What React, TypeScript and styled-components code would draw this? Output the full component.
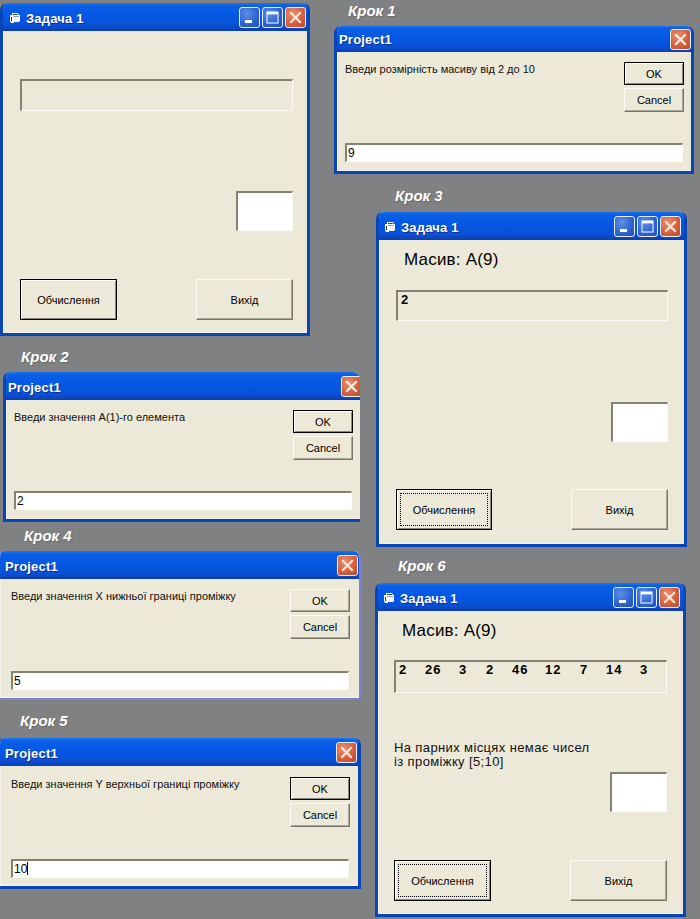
import React from "react";
import styled, { createGlobalStyle } from "styled-components";

const Global = createGlobalStyle`
  html, body { margin: 0; padding: 0; background: #808080; }
  #root { width: 700px; height: 919px; }
`;

const Desktop = styled.div`
  position: relative;
  width: 700px;
  height: 919px;
  overflow: hidden;
  background: #808182;
  font-family: "Liberation Sans", Arial, sans-serif;
`;

const StepLabel = styled.div<{ $x: number; $y: number }>`
  position: absolute;
  left: ${(p) => p.$x}px;
  top: ${(p) => p.$y}px;
  color: #fff;
  font: italic bold 15px/18px "Liberation Sans", Arial, sans-serif;
  text-shadow: 1px 1px 1px #6a6a6a;
  white-space: nowrap;
`;

const Win = styled.div<{ $x: number; $y: number; $w: number; $h: number; $cut?: boolean; $soft?: boolean }>`
  position: absolute;
  left: ${(p) => p.$x}px;
  top: ${(p) => p.$y}px;
  width: ${(p) => p.$w}px;
  height: ${(p) => p.$h}px;
  box-sizing: border-box;
  display: flex;
  flex-direction: column;
  border-style: solid;
  border-color: ${(p) => (p.$soft ? "#7d7fd0" : "#0a45b8")};
  border-width: 0 ${(p) => (p.$cut ? 0 : p.$soft ? 2 : 3)}px ${(p) => (p.$soft ? 2 : 3)}px 3px;
  border-radius: 7px 7px 0 0;
  overflow: hidden;
  background: #ece9d8;
`;

const TitleBar = styled.div<{ $tall: number; $left: number; $right: number }>`
  flex: none;
  height: ${(p) => p.$tall}px;
  display: flex;
  align-items: center;
  margin: 0 -3px;
  padding: 0 ${(p) => p.$right}px 0 ${(p) => p.$left}px;
  gap: 5px;
  background: linear-gradient(180deg, #1f76ec 0%, #0a5ee6 10%, #0558e4 45%, #0a50d6 80%, #0b3fae 100%);
`;

const TitleText = styled.span<{ $drop: number }>`
  flex: 1;
  padding-top: ${(p) => p.$drop}px;
  color: #fff;
  font: bold 13px/16px Tahoma, "Liberation Sans", sans-serif;
  letter-spacing: 0.2px;
  text-shadow: 1px 1px 0 #0a2f90;
  white-space: nowrap;
`;

const Controls = styled.div<{ $drop: number }>`
  display: flex;
  gap: 2px;
  margin-top: ${(p) => p.$drop}px;
`;

const CtlButton = styled.div<{ $close?: boolean }>`
  width: 21px;
  height: 21px;
  box-sizing: border-box;
  border: 1px solid #e8eefc;
  border-radius: 3px;
  display: flex;
  align-items: center;
  justify-content: center;
  background: ${(p) =>
    p.$close
      ? "radial-gradient(circle at 35% 30%, #e88f70 0%, #d6603c 55%, #b84a2a 100%)"
      : "radial-gradient(circle at 35% 30%, #5d8fe6 0%, #2c62cf 60%, #1f4fb8 100%)"};
`;

const AppIcon = () => (
  <svg width="12" height="12" viewBox="0 0 12 12" style={{ flex: "none", marginTop: 2 }}>
    <path d="M1 3h2V1h6l1 2h1v6l-1 1H5v1H2l-1-2z" fill="#fff" />
    <path d="M2 2h1v1H2zM4 2h5v1H4zM2 5h1v4H2z" fill="#30405e" />
    <path d="M4 4h6v1H4z" fill="#8ea2c8" />
  </svg>
);

const MinIcon = () => (
  <svg width="11" height="11" viewBox="0 0 11 11">
    <rect x="1" y="8" width="7" height="3" fill="#fff" />
  </svg>
);
const MaxIcon = () => (
  <svg width="13" height="13" viewBox="0 0 13 13">
    <rect x="1" y="1" width="11" height="11" fill="none" stroke="#dfe8fb" strokeWidth="1.2" />
    <rect x="1" y="1" width="11" height="2.4" fill="#fff" />
  </svg>
);
const CloseIcon = () => (
  <svg width="13" height="13" viewBox="0 0 13 13">
    <path d="M2 2l9 9M11 2l-9 9" stroke="#fbe9e2" strokeWidth="2.2" strokeLinecap="square" />
  </svg>
);

const FormClient = styled.div<{ $pl: number; $pr: number }>`
  flex: 1;
  display: flex;
  flex-direction: column;
  padding: 0 ${(p) => p.$pr}px 0 ${(p) => p.$pl}px;
  box-shadow: inset 1px 0 0 #f4f3ec, inset 0 -1px 0 #f4f3ec;
`;

const ArrayHeading = styled.div`
  margin: 10px 0 0 ${"8px"};
  height: 20px;
  font: 17px/20px "Liberation Sans", Arial, sans-serif;
  letter-spacing: 0.2px;
  color: #000;
`;

const Sunken = styled.div<{ $top: number; $height: number }>`
  margin-top: ${(p) => p.$top}px;
  height: ${(p) => p.$height}px;
  box-sizing: border-box;
  border-style: solid;
  border-width: 2px 1px 1px 2px;
  border-color: #84836f #fbfbf6 #fbfbf6 #84836f;
`;

const OutputBox = styled(Sunken)`
  padding: 0 3px;
  font: bold 13px/16px "Liberation Sans", Arial, sans-serif;
  letter-spacing: 1px;
  color: #000;
`;

const Numbers = styled.div`
  display: flex;
`;

const Num = styled.span<{ $w: number }>`
  width: ${(p) => p.$w}px;
  flex: none;
`;

const ResultBox = styled(Sunken)`
  width: 57px;
  align-self: flex-end;
  background: #fff;
`;

const ResultText = styled.div`
  margin-top: 48px;
  height: 28px;
  font: 13px/14px "Liberation Sans", Arial, sans-serif;
  letter-spacing: 0.38px;
  color: #111;
`;

const ButtonRow = styled.div<{ $top: number }>`
  margin-top: ${(p) => p.$top}px;
  display: flex;
  justify-content: space-between;
`;

const Btn = styled.div<{ $w: number; $h: number; $def?: boolean; $focus?: boolean }>`
  position: relative;
  width: ${(p) => p.$w}px;
  height: ${(p) => p.$h}px;
  box-sizing: border-box;
  display: flex;
  align-items: center;
  justify-content: center;
  background: #ece9d8;
  color: #000;
  font: 11px/14px "Liberation Sans", Arial, sans-serif;
  border-style: solid;
  border-width: 1px;
  border-color: ${(p) => (p.$def ? "#000" : "#fbfaf3 #77756a #77756a #fbfaf3")};
  box-shadow: ${(p) =>
    p.$def
      ? "inset 1px 1px 0 #fff, inset -1px -1px 0 #8a8876"
      : "inset -1px -1px 0 #aca899"};
  &::after {
    content: "";
    display: ${(p) => (p.$focus ? "block" : "none")};
    position: absolute;
    inset: 3px;
    border: 1px dotted #000;
  }
`;

const PromptClient = styled.div<{ $pl: number; $pr: number; $pt: number }>`
  flex: 1;
  display: flex;
  flex-direction: column;
  padding: ${(p) => p.$pt}px ${(p) => p.$pr}px 0 ${(p) => p.$pl}px;
  box-shadow: inset 1px 0 0 #f4f3ec, inset 0 -1px 0 #f4f3ec;
`;

const PromptTop = styled.div`
  display: flex;
  justify-content: space-between;
  align-items: flex-start;
`;

const PromptText = styled.div`
  font: 11px/14px "Liberation Sans", Arial, sans-serif;
  color: #111;
`;

const PromptButtons = styled.div`
  display: flex;
  flex-direction: column;
  gap: 3px;
`;

const InputField = styled(Sunken)`
  background: #fff;
  font: 12px/16px "Liberation Sans", Arial, sans-serif;
  color: #000;
  padding-left: 1px;
  margin-right: 1px;
`;

const Caret = styled.span`
  display: inline-block;
  width: 1px;
  height: 13px;
  background: #000;
  vertical-align: -2px;
`;

function TitleControls({ full, drop }: { full: boolean; drop: number }) {
  return (
    <Controls $drop={drop}>
      {full && (
        <CtlButton>
          <MinIcon />
        </CtlButton>
      )}
      {full && (
        <CtlButton>
          <MaxIcon />
        </CtlButton>
      )}
      <CtlButton $close>
        <CloseIcon />
      </CtlButton>
    </Controls>
  );
}

type FormProps = {
  x: number; y: number; w: number; h: number;
  tl: number; tr: number; drop: number;
  pl: number; pr: number;
  values?: number[]; widths?: number[];
  result?: boolean; focus?: boolean;
  boxTop: number; boxH: number; whiteTop: number; whiteH: number; btnTop: number; btnW: number;
};

function FormWindow(p: FormProps) {
  const heading = p.values !== undefined;
  return (
    <Win $x={p.x} $y={p.y} $w={p.w} $h={p.h}>
      <TitleBar $tall={28} $left={p.tl} $right={p.tr}>
        <AppIcon />
        <TitleText $drop={3}>Задача 1</TitleText>
        <TitleControls full drop={p.drop} />
      </TitleBar>
      <FormClient $pl={p.pl} $pr={p.pr}>
        {heading && <ArrayHeading>Масив: A(9)</ArrayHeading>}
        <OutputBox $top={p.boxTop} $height={p.boxH}>
          {p.values && (
            <Numbers>
              {p.values.map((v, i) => (
                <Num key={i} $w={p.widths ? p.widths[i] : 20}>
                  {v}
                </Num>
              ))}
            </Numbers>
          )}
        </OutputBox>
        {p.result && (
          <ResultText>
            На парних місцях немає чисел
            <br />
            із проміжку [5;10]
          </ResultText>
        )}
        <ResultBox $top={p.whiteTop} $height={p.whiteH} />
        <ButtonRow $top={p.btnTop}>
          <Btn $w={p.btnW} $h={41} $def $focus={p.focus}>
            Обчислення
          </Btn>
          <Btn $w={97} $h={41}>
            Вихід
          </Btn>
        </ButtonRow>
      </FormClient>
    </Win>
  );
}

type PromptProps = {
  x: number; y: number; w: number; h: number; tall: number;
  tl: number; tr: number; textDrop: number;
  pl: number; pr: number; pt: number;
  text: string; value: string; gap: number;
  cut?: boolean; soft?: boolean; caret?: boolean; plainOk?: boolean;
};

function PromptWindow(p: PromptProps) {
  return (
    <Win $x={p.x} $y={p.y} $w={p.w} $h={p.h} $cut={p.cut} $soft={p.soft}>
      <TitleBar $tall={p.tall} $left={p.tl} $right={p.tr}>
        <TitleText $drop={p.textDrop}>Project1</TitleText>
        <TitleControls full={false} drop={1} />
      </TitleBar>
      <PromptClient $pl={p.pl} $pr={p.pr} $pt={p.pt}>
        <PromptTop>
          <PromptText>{p.text}</PromptText>
          <PromptButtons>
            <Btn $w={60} $h={23} $def={!p.plainOk}>
              OK
            </Btn>
            <Btn $w={60} $h={24}>
              Cancel
            </Btn>
          </PromptButtons>
        </PromptTop>
        <InputField $top={p.gap} $height={19}>
          {p.value}
          {p.caret && <Caret />}
        </InputField>
      </PromptClient>
    </Win>
  );
}

export default function App() {
  return (
    <Desktop>
      <Global />
      <FormWindow x={0} y={3} w={310} h={333} tl={9} tr={4} drop={0} pl={17} pr={14} boxTop={48} boxH={32} whiteTop={80} whiteH={40} btnTop={48} btnW={97} />
      <PromptWindow x={334} y={26} w={360} h={148} tall={26} tl={5} tr={3} textDrop={2} pl={8} pr={7} pt={10} text="Введи розмірність масиву від 2 до 10" value="9" gap={31} />
      <FormWindow x={376} y={212} w={311} h={335} tl={8} tr={6} drop={1} pl={17} pr={16} values={[2]} boxTop={20} boxH={31} whiteTop={81} whiteH={40} btnTop={47} btnW={96} focus />
      <PromptWindow x={3} y={372} w={357} h={150} tall={28} tl={5} tr={1} textDrop={3} pl={8} pr={7} pt={10} text="Введи значення А(1)-го елемента" value="2" gap={31} cut />
      <PromptWindow x={-3} y={551} w={364} h={149} tall={28} tl={8} tr={4} textDrop={3} pl={11} pr={9} pt={10} text="Введи значення Х нижньої границі проміжку" value="5" gap={32} soft plainOk />
      <PromptWindow x={-3} y={738} w={364} h={151} tall={28} tl={8} tr={4} textDrop={3} pl={11} pr={8} pt={11} text="Введи значення Y верхньої границі проміжку" value="10" gap={32} caret />
      <FormWindow
        x={375}
        y={583}
        w={311}
        h={334}
        tl={8}
        tr={6}
        drop={1}
        pl={16}
        pr={16}
        values={[2, 26, 3, 2, 46, 12, 7, 14, 3]}
        widths={[26, 34, 27, 26, 33, 35, 26, 34, 20]}
        result
        boxTop={19}
        boxH={33}
        whiteTop={3}
        whiteH={40}
        btnTop={48}
        btnW={97}
        focus
      />
      <StepLabel $x={348} $y={2}>Крок 1</StepLabel>
      <StepLabel $x={21} $y={348}>Крок 2</StepLabel>
      <StepLabel $x={395} $y={187}>Крок 3</StepLabel>
      <StepLabel $x={24} $y={527}>Крок 4</StepLabel>
      <StepLabel $x={20} $y={712}>Крок 5</StepLabel>
      <StepLabel $x={398} $y={557}>Крок 6</StepLabel>
    </Desktop>
  );
}
